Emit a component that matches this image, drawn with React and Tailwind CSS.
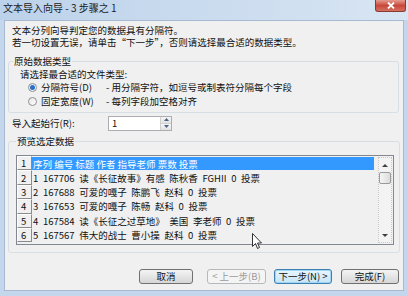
import React from 'react'

const rows = [
  '1 167706 读《长征故事》有感 陈秋香 FGHII 0 投票',
  '2 167688 可爱的嘎子 陈鹏飞 赵科 0 投票',
  '3 167653 可爱的嘎子 陈畅 赵科 0 投票',
  '4 167584 读《长征之过草地》 美国 李老师 0 投票',
  '5 167567 伟大的战士 曹小操 赵科 0 投票',
]

function Radio({ checked }) {
  return (
    <span className="flex h-[9px] w-[9px] shrink-0 items-center justify-center rounded-full border border-[#8e8f8f] bg-gradient-to-br from-[#e6e6e6] to-[#ffffff]">
      {checked && <span className="h-[5px] w-[5px] rounded-full bg-[#2a6fc9]" />}
    </span>
  )
}

function Btn({ children, className, variant }) {
  const look =
    variant === 'focus'
      ? 'border-[#3c7fb1] bg-gradient-to-b from-[#eaf6fd] to-[#c4e5f8] text-[#111] shadow-[inset_0_0_0_1px_#9fd5f5]'
      : variant === 'disabled'
        ? 'border-[#b5b9bc] bg-[#f4f4f4] text-[#9a9a9a]'
        : 'border-[#707070] bg-gradient-to-b from-[#f4f4f4] to-[#d6d6d6] text-[#111]'
  return (
    <div
      className={
        'flex h-[15px] items-center justify-center rounded-[3px] border text-[9.5px] leading-none ' +
        look +
        ' ' +
        className
      }
    >
      {children}
    </div>
  )
}

function NumCell({ n }) {
  return (
    <div className="flex h-full w-[15px] shrink-0 items-center border-b border-r border-b-[#8a8a8a] border-r-[#8a8a8a] border-l border-t border-l-white border-t-white bg-[#f0f0f0] pl-[3px] text-[9.5px]">
      {n}
    </div>
  )
}

export default function App() {
  return (
    <div
      className="relative flex h-[296px] w-[408px] flex-col overflow-hidden bg-[#c3d6ec] text-[#111]"
      style={{ fontFamily: '"Noto Sans CJK SC", "Noto Sans", sans-serif' }}
    >
      {/* title bar */}
      <div className="flex h-[20px] shrink-0 items-start justify-between bg-gradient-to-r from-[#bcd2ea] to-[#d8e5f3]">
        <div className="pl-[3px] pt-[2px] text-[10px] leading-[12px] text-[#1b1b1b]">文本导入向导 - 3 步骤之 1</div>
        <div className="mr-[2px] flex h-[12px] w-[31px] items-center justify-center rounded-b-[3px] border border-t-0 border-[#8a3a33] bg-gradient-to-b from-[#e39b8f] via-[#c8473a] to-[#d5705f]">
          <svg width="8" height="7" viewBox="0 0 8 7">
            <path d="M1 0.5 L7 6.5 M7 0.5 L1 6.5" stroke="#fff" strokeWidth="1.8" />
          </svg>
        </div>
      </div>

      {/* body */}
      <div className="mx-[4px] mb-[5px] flex flex-1 flex-col border border-[#a7bad1] bg-[#f0f0f0] text-[9.5px] leading-[12px]">
        <div className="pl-[7px] pt-[3px]">
          <div>文本分列向导判定您的数据具有分隔符。</div>
          <div>若一切设置无误，请单击“下一步”，否则请选择最合适的数据类型。</div>
        </div>

        <fieldset className="ml-[3px] mt-[7px] w-[391px] rounded-[3px] border border-[#d5dfe5] pb-[5px]">
          <legend className="ml-[4px] px-[1px] leading-[12px]">原始数据类型</legend>
          <div className="pl-[11px] pt-[1px]">请选择最合适的文件类型:</div>
          <div className="ml-[19px] mt-[1px] flex h-[12px] items-center">
            <Radio checked />
            <span className="ml-[4px] w-[65px]">分隔符号(D)</span>
            <span>- 用分隔字符，如逗号或制表符分隔每个字段</span>
          </div>
          <div className="ml-[19px] mt-[2px] flex h-[12px] items-center">
            <Radio />
            <span className="ml-[4px] w-[65px]">固定宽度(W)</span>
            <span>- 每列字段加空格对齐</span>
          </div>
        </fieldset>

        <div className="mt-[2px] flex h-[16px] items-center">
          <span className="ml-[7px] w-[96px]">导入起始行(R):</span>
          <div className="flex h-[15px] w-[64px] items-center border border-[#abadb3] bg-white">
            <span className="flex-1 pl-[3px]">1</span>
            <div className="flex h-full w-[11px] flex-col border-l border-[#d0d0d0]">
              <div className="flex flex-1 items-center justify-center bg-gradient-to-b from-[#f6f6f6] to-[#e2e2e2]">
                <svg width="5" height="3" viewBox="0 0 5 3"><path d="M0 3 L2.5 0 L5 3Z" fill="#4d6185" /></svg>
              </div>
              <div className="flex flex-1 items-center justify-center border-t border-[#d0d0d0] bg-gradient-to-b from-[#f6f6f6] to-[#e2e2e2]">
                <svg width="5" height="3" viewBox="0 0 5 3"><path d="M0 0 L2.5 3 L5 0Z" fill="#4d6185" /></svg>
              </div>
            </div>
          </div>
        </div>

        <fieldset className="ml-[3px] mt-[4px] w-[392px] rounded-[3px] border border-[#d5dfe5] pb-[7px]">
          <legend className="ml-[7px] px-[1px] leading-[12px]">预览选定数据</legend>
          <div className="ml-[7px] mt-[8px] flex h-[90px] w-[378px] border border-[#828790] bg-[#f0f0f0]">
            <div className="flex flex-1 flex-col [word-spacing:2.5px]">
              <div className="flex h-[14.4px] items-center">
                <NumCell n={1} />
                <div className="mt-[1px] flex h-[13px] w-[342px] items-center bg-[#3399ff] pl-[1px] text-white [word-spacing:0px]">
                  序列 编号 标题 作者 指导老师 票数 投票
                </div>
              </div>
              {rows.map((r, i) => (
                <div key={i} className="flex h-[14.4px] items-center">
                  <NumCell n={i + 2} />
                  <div className="whitespace-pre pl-[1px]">{r}</div>
                </div>
              ))}
            </div>
            <div className="my-[1px] mr-[1px] flex w-[14px] flex-col border border-dotted border-[#c8c8c8] bg-[#f3f3f3]">
              <div className="flex h-[14px] items-center justify-center">
                <svg width="6" height="3" viewBox="0 0 6 3"><path d="M0 3 L3 0 L6 3Z" fill="#404040" /></svg>
              </div>
              <div className="h-[12px] rounded-[2px] border border-[#9a9a9a] bg-gradient-to-r from-[#f5f5f5] to-[#dcdcdc]" />
              <div className="flex-1" />
              <div className="flex h-[14px] items-center justify-center">
                <svg width="6" height="3" viewBox="0 0 6 3"><path d="M0 0 L3 3 L6 0Z" fill="#404040" /></svg>
              </div>
            </div>
          </div>
        </fieldset>

        <div className="mt-[16px] flex justify-end pr-[4px]">
          <Btn className="w-[54px]">取消</Btn>
          <Btn className="ml-[14px] w-[59px]" variant="disabled">&lt; 上一步(B)</Btn>
          <Btn className="ml-[8px] w-[58px]" variant="focus">下一步(N) &gt;</Btn>
          <Btn className="ml-[9px] w-[58px]">完成(F)</Btn>
        </div>
      </div>

      {/* mouse pointer */}
      <svg className="absolute left-[252px] top-[233px]" width="10" height="17" viewBox="0 0 10 17">
        <path d="M0.5 0.5 L0.5 13.5 L3.5 10.5 L5.5 15.5 L7.5 14.5 L5.5 10 L9.5 10 Z" fill="#fff" stroke="#333" strokeWidth="1" />
      </svg>
    </div>
  )
}
